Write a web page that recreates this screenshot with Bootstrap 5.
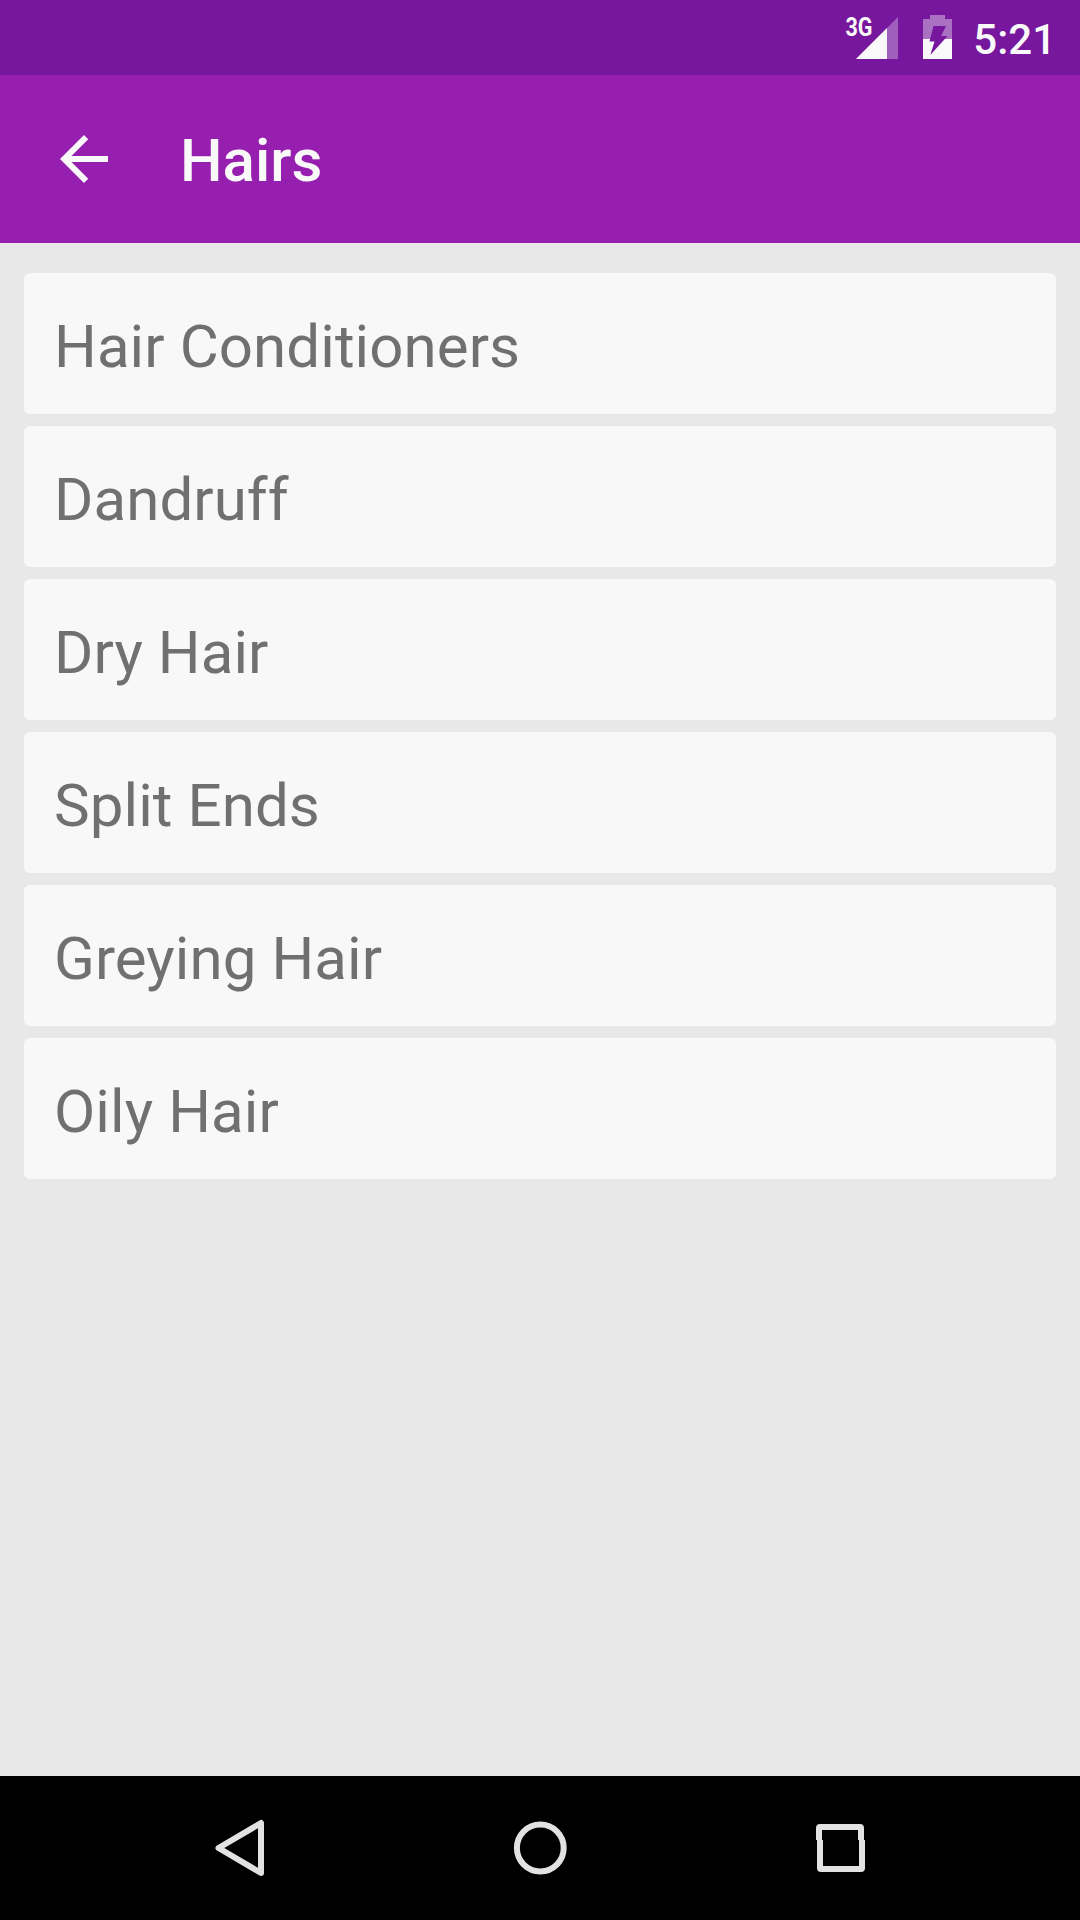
<!DOCTYPE html>
<html lang="en">
<head>
<meta charset="utf-8">
<meta name="viewport" content="width=device-width, initial-scale=1">
<title>Hairs</title>
<link rel="stylesheet" href="https://cdn.jsdelivr.net/npm/bootstrap@5.3.0/dist/css/bootstrap.min.css">
<style>
body{font-family:Roboto,"Noto Sans",sans-serif;background:#e8e8e8;height:1920px;overflow:hidden}
.status-bar{height:75px;background:#77179e;color:#f9f9f9}
.clock{font-size:42px;font-weight:500;line-height:75px;padding:2px 24px 0 19px}
.app-bar{height:168px;background:#971faf;padding:0 48px}
.app-title{font-size:60px;font-weight:500;line-height:70px;color:#f9f9f9;margin-left:60px;padding-top:4px}
.topics{padding:30px 24px;gap:12px}
.topics .list-group-item{height:141px;background:#f8f8f8;color:#707070;border-radius:6px;font-size:60px;letter-spacing:.08px;line-height:78px;padding:35px 30px 28px}
.nav-keys{height:144px;background:#000}
</style>
<script src="https://cdn.jsdelivr.net/npm/bootstrap@5.3.0/dist/js/bootstrap.bundle.min.js"></script>
</head>
<body class="d-flex flex-column">
<header class="flex-shrink-0">
  <div class="status-bar d-flex justify-content-end">
    <svg width="110" height="75" viewBox="844 0 110 75" role="img" aria-label="3G signal, battery charging">
      <path d="M856 59L898 17V59Z" fill="#a05fbc"/>
      <path d="M856 59L887 28V59Z" fill="#f9f9f9"/>
      <text x="845.5" y="35.5" font-size="25.500" font-weight="700" fill="#f9f9f9" textLength="27" lengthAdjust="spacingAndGlyphs">3G</text>
      <path d="M930 15H945V19H952V39H923V19H930Z" fill="#aa71c2"/>
      <path d="M923 39H952V59H923Z" fill="#f9f9f9"/>
      <path d="M933.500 26H946L941 36H947.500L930.300 55L934.500 41.500H929.500Z" fill="#77179e"/>
    </svg>
    <div class="clock">5:21</div>
  </div>
  <nav class="app-bar d-flex align-items-center">
    <svg width="72" height="72" viewBox="0 0 24 24" fill="#f9f9f9" role="img" aria-label="Back"><path d="M20 11H7.83l5.59-5.59L12 4l-8 8 8 8 1.41-1.41L7.83 13H20v-2z"/></svg>
    <h1 class="app-title mb-0">Hairs</h1>
  </nav>
</header>
<main class="flex-grow-1">
  <div class="topics list-group">
    <a class="list-group-item border-0">Hair Conditioners</a>
    <a class="list-group-item border-0">Dandruff</a>
    <a class="list-group-item border-0">Dry Hair</a>
    <a class="list-group-item border-0">Split Ends</a>
    <a class="list-group-item border-0">Greying Hair</a>
    <a class="list-group-item border-0">Oily Hair</a>
  </div>
</main>
<footer class="nav-keys d-flex justify-content-center flex-shrink-0">
  <svg width="300" height="144" viewBox="90 0 300 144"><path d="M218.500 72L261 47V97Z" fill="none" stroke="#e2e2e2" stroke-width="6" stroke-linejoin="round"/></svg>
  <svg width="300" height="144" viewBox="390 0 300 144"><circle cx="540.300" cy="72" r="23.400" fill="none" stroke="#e2e2e2" stroke-width="6"/></svg>
  <svg width="300" height="144" viewBox="690 0 300 144"><path fill="#e2e2e2" fill-rule="evenodd" d="M820 48H860Q864 48 864 52V64H865V92Q865 96 861 96H821Q817 96 817 92V64H816V52Q816 48 820 48ZM822 54V64H823V90H859V64H858V54Z"/></svg>
</footer>
</body>
</html>
